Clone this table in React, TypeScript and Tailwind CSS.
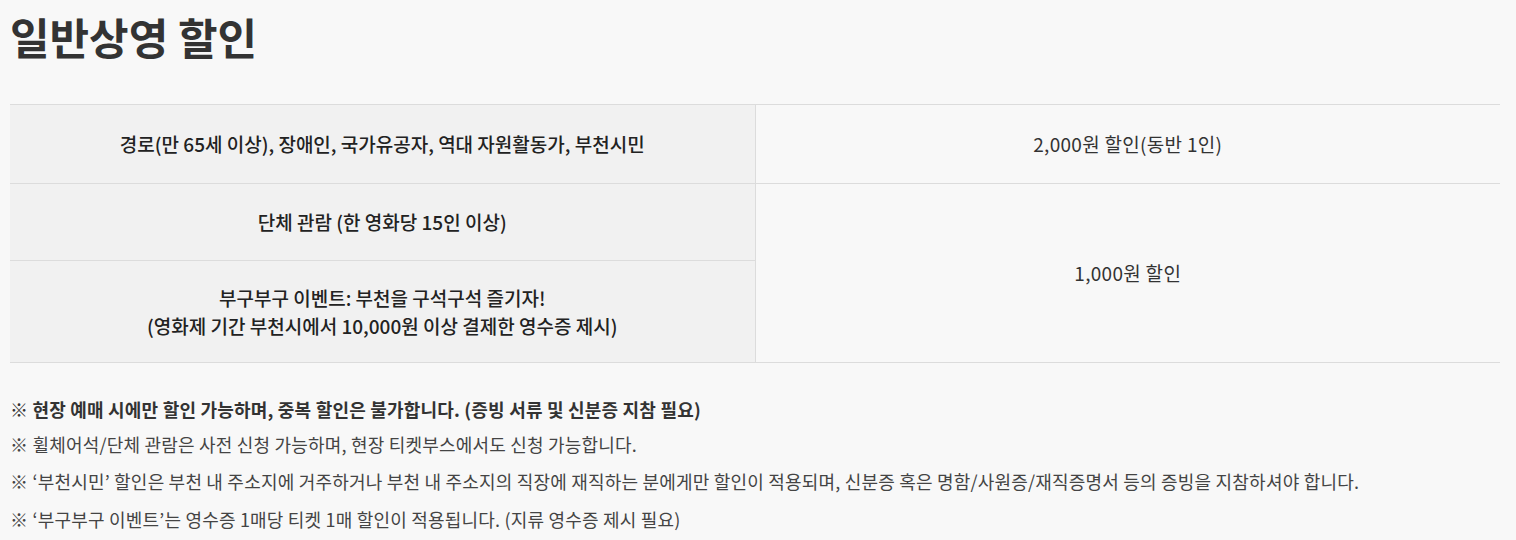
const font = { fontFamily: '"Noto Sans CJK KR", "Noto Sans", sans-serif' };

const notes = [
  { text: '※ 현장 예매 시에만 할인 가능하며, 중복 할인은 불가합니다. (증빙 서류 및 신분증 지참 필요)', cls: 'leading-[34px] font-bold text-[#333]' },
  { text: '※ 휠체어석/단체 관람은 사전 신청 가능하며, 현장 티켓부스에서도 신청 가능합니다.', cls: 'leading-[36px]' },
  {
    text: '※ ‘부천시민’ 할인은 부천 내 주소지에 거주하거나 부천 내 주소지의 직장에 재직하는 분에게만 할인이 적용되며, 신분증 혹은 명함/사원증/재직증명서 등의 증빙을 지참하셔야 합니다.',
    cls: 'leading-[38px]',
  },
  { text: '※ ‘부구부구 이벤트’는 영수증 1매당 티켓 1매 할인이 적용됩니다. (지류 영수증 제시 필요)', cls: 'leading-[38px]' },
];

export default function App() {
  return (
    <div className="min-h-[540px] w-[1516px] bg-[#f8f8f8] px-[10px] pt-[6px] text-[#333]" style={font}>
      <h1 className="text-[43px] font-bold leading-[60px] text-[#333]">일반상영 할인</h1>

      <table className="mt-[38px] w-[1490px] border-collapse text-[19px]">
        <tbody>
          <tr className="h-[79px] border-t border-b border-[#dcdcdc]">
            <td className="w-[745px] border-r border-[#dcdcdc] bg-[#f1f1f1] text-center font-medium text-[#222]">
              경로(만 65세 이상), 장애인, 국가유공자, 역대 자원활동가, 부천시민
            </td>
            <td className="text-center tracking-[0.3px] text-[#333]">2,000원 할인(동반 1인)</td>
          </tr>
          <tr className="h-[77px] border-b border-[#dcdcdc]">
            <td className="border-r border-[#dcdcdc] bg-[#f1f1f1] text-center font-medium text-[#222]">
              단체 관람 (한 영화당 15인 이상)
            </td>
            <td rowSpan={2} className="text-center tracking-[0.3px] text-[#333]">
              1,000원 할인
            </td>
          </tr>
          <tr className="h-[102px] border-b border-[#dcdcdc]">
            <td className="border-r border-[#dcdcdc] bg-[#f1f1f1] text-center font-medium leading-[28px] text-[#222]">
              부구부구 이벤트: 부천을 구석구석 즐기자!
              <br />
              (영화제 기간 부천시에서 10,000원 이상 결제한 영수증 제시)
            </td>
          </tr>
        </tbody>
      </table>

      <div className="mt-[29px] text-[18px] tracking-[0.2px] text-[#444]">
        {notes.map((n) => (
          <p key={n.text} className={n.cls}>
            {n.text}
          </p>
        ))}
      </div>
    </div>
  );
}
